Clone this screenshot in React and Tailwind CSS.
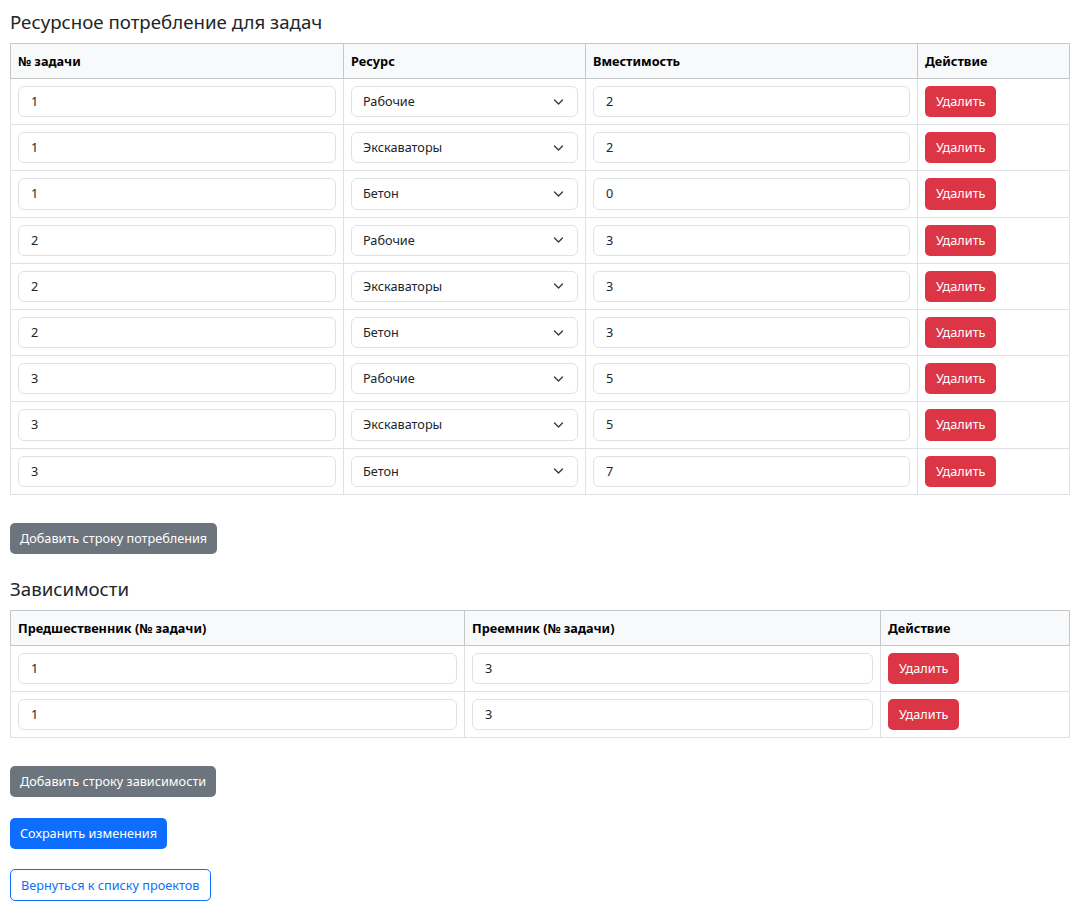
import React from "react";

const usage = [
  ["1", "Рабочие", "2"],
  ["1", "Экскаваторы", "2"],
  ["1", "Бетон", "0"],
  ["2", "Рабочие", "3"],
  ["2", "Экскаваторы", "3"],
  ["2", "Бетон", "3"],
  ["3", "Рабочие", "5"],
  ["3", "Экскаваторы", "5"],
  ["3", "Бетон", "7"],
];

const deps = [
  ["1", "3"],
  ["1", "3"],
];

function Input({ value }) {
  return (
    <div className="h-[31.2px] w-full border border-[#dee2e6] rounded-[6px] bg-white flex items-center pl-[12px] text-[12.7px] text-[#212529]">
      {value}
    </div>
  );
}

function Select({ value }) {
  return (
    <div className="h-[31.2px] w-full border border-[#dee2e6] rounded-[6px] bg-white flex items-center justify-between pl-[11px] pr-[13px] text-[12.7px] text-[#212529]">
      <span>{value}</span>
      <svg width="11" height="8" viewBox="0 0 16 12" fill="none">
        <path d="M2 3l6 6 6-6" stroke="#343a40" strokeWidth="2" strokeLinecap="round" strokeLinejoin="round" />
      </svg>
    </div>
  );
}

function DelBtn() {
  return (
    <button className="block h-[31.2px] px-[11px] rounded-[5px] bg-[#dc3545] text-white text-[12.7px]">Удалить</button>
  );
}

function Th({ children, w }) {
  return (
    <th className={`${w} h-[35px] bg-[#f8f9fa] border border-[#c6c7c8] px-[7px] pt-[2px] text-left font-bold text-[12.7px] text-black align-middle`}>
      {children}
    </th>
  );
}

function Td({ children }) {
  return <td className="border border-[#dee2e6] px-[7px] py-[7px] align-middle">{children}</td>;
}

export default function App() {
  return (
    <div className="flex flex-col items-start px-[10px] pt-[10px] pb-[16px] text-[#212529] bg-white" style={{ fontFamily: '"Noto Sans", "Open Sans", sans-serif' }}>
      <h4 className="text-[18.7px] leading-[24px] mb-[9px] font-normal">Ресурсное потребление для задач</h4>
      <table className="w-[1059px] border-collapse table-fixed">
        <thead>
          <tr>
            <Th w="w-[333px]">№ задачи</Th>
            <Th w="w-[242px]">Ресурс</Th>
            <Th w="w-[332px]">Вместимость</Th>
            <Th w="w-[152px]">Действие</Th>
          </tr>
        </thead>
        <tbody>
          {usage.map((r, i) => (
            <tr key={i}>
              <Td><Input value={r[0]} /></Td>
              <Td><Select value={r[1]} /></Td>
              <Td><Input value={r[2]} /></Td>
              <Td><DelBtn /></Td>
            </tr>
          ))}
        </tbody>
      </table>

      <button className="mt-[28px] h-[31px] px-[10px] rounded-[5px] bg-[#6c757d] text-white text-[12.7px]">Добавить строку потребления</button>

      <h4 className="mt-[23px] text-[18.7px] leading-[24px] mb-[9px] font-normal">Зависимости</h4>
      <table className="w-[1059px] border-collapse table-fixed">
        <thead>
          <tr>
            <Th w="w-[454px]">Предшественник (№ задачи)</Th>
            <Th w="w-[416px]">Преемник (№ задачи)</Th>
            <Th w="w-[189px]">Действие</Th>
          </tr>
        </thead>
        <tbody>
          {deps.map((r, i) => (
            <tr key={i}>
              <Td><Input value={r[0]} /></Td>
              <Td><Input value={r[1]} /></Td>
              <Td><DelBtn /></Td>
            </tr>
          ))}
        </tbody>
      </table>

      <button className="mt-[28px] h-[31px] px-[10px] rounded-[5px] bg-[#6c757d] text-white text-[12.7px]">Добавить строку зависимости</button>
      <button className="mt-[21px] h-[31px] px-[10px] rounded-[5px] bg-[#0d6efd] text-white text-[12.7px]">Сохранить изменения</button>
      <button className="mt-[20px] h-[32px] px-[10px] rounded-[5px] border border-[#0d6efd] bg-white text-[#0d6efd] text-[12.7px]">Вернуться к списку проектов</button>
    </div>
  );
}
